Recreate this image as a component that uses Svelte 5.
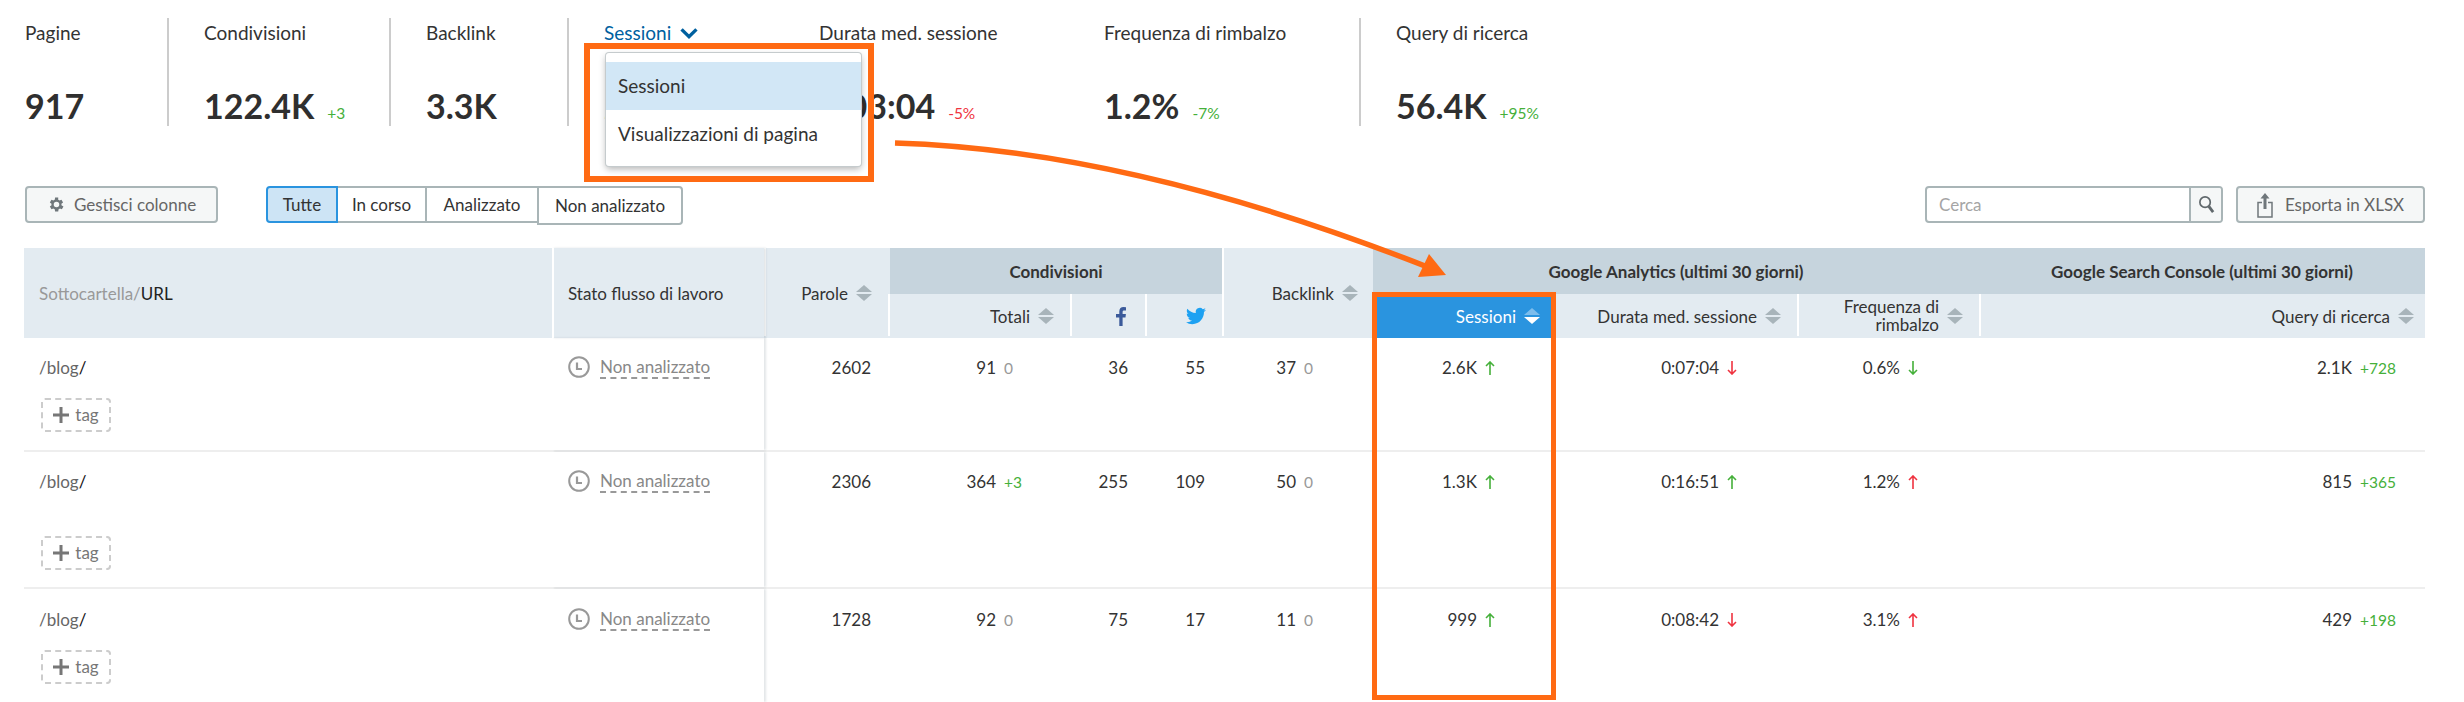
<script>
  const kpis = [
    { label: 'Pagine', value: '917', w: 142, plain: true },
    { label: 'Condivisioni', value: '122.4K', delta: '+3', w: 222, line: true },
    { label: 'Backlink', value: '3.3K', w: 178, line: true },
    { label: 'Sessioni', value: '2.6K', w: 252, line: true, link: true },
    { label: 'Durata med. sessione', value: '0:03:04', delta: '-5%', bad: true, w: 285, plain: true },
    { label: 'Frequenza di rimbalzo', value: '1.2%', delta: '-7%', w: 255, plain: true },
    { label: 'Query di ricerca', value: '56.4K', delta: '+95%', w: 300, line: true }
  ];
  const tabs = ['Tutte', 'In corso', 'Analizzato', 'Non analizzato'];
  const rows = [
    { cls: 'r1', par: '2602', tot: '91', totD: '0', totC: 'zero', fb: '36', tw: '55', bl: '37', ses: '2.6K', sesA: 'up good', dur: '0:07:04', durA: 'down bad', fr: '0.6%', frA: 'down good', q: '2.1K', qD: '+728' },
    { cls: 'r2', par: '2306', tot: '364', totD: '+3', totC: 'pos', fb: '255', tw: '109', bl: '50', ses: '1.3K', sesA: 'up good', dur: '0:16:51', durA: 'up good', fr: '1.2%', frA: 'up bad', q: '815', qD: '+365' },
    { cls: 'r3', par: '1728', tot: '92', totD: '0', totC: 'zero', fb: '75', tw: '17', bl: '11', ses: '999', sesA: 'up good', dur: '0:08:42', durA: 'down bad', fr: '3.1%', frA: 'up bad', q: '429', qD: '+198' }
  ];
</script>

{#snippet sort(active = false)}
  <svg class="sort" class:active viewBox="0 0 16 16" width="16" height="16" aria-hidden="true">
    <path class="s-up" d="M8 0 16 7H0z" />
    <path class="s-down" d="M0 9h16l-8 7z" />
  </svg>
{/snippet}

{#snippet arrow(kind)}
  <svg class="arrow {kind}" viewBox="0 0 10 14" width="10" height="14" aria-hidden="true">
    {#if kind.startsWith('up')}
      <path d="M5 14V1M1 5l4-4 4 4" />
    {:else}
      <path d="M5 0v13M1 9l4 4 4-4" />
    {/if}
  </svg>
{/snippet}

<div class="page">
  <section class="kpis">
    {#each kpis as k}
      <div class="kpi" class:plain={k.plain} class:line={k.line} style="width:{k.w}px">
        <div class="kpi-label" class:link={k.link}>
          {#if k.link}
            <span class="under">{k.label}</span>
            <svg viewBox="0 0 20 14" width="20" height="13" aria-hidden="true"><path d="M2 2.500l8 8 8-8" fill="none" stroke="#00609f" stroke-width="3.600" /></svg>
          {:else}
            {k.label}
          {/if}
        </div>
        <div class="kpi-value">
          <b>{k.value}</b>
          {#if k.delta}<span class="kpi-delta" class:bad={k.bad}>{k.delta}</span>{/if}
        </div>
      </div>
    {/each}
  </section>

  <section class="toolbar">
    <button class="btn manage">
      <svg viewBox="0 0 24 24" width="19" height="19" aria-hidden="true"><path fill="#6f777b" d="M19.400 13a7.600 7.600 0 0 0 0-2l2.100-1.600-2-3.500-2.500 1a7.500 7.500 0 0 0-1.700-1L15.400 3.200h-4l-.4 2.700a7.500 7.500 0 0 0-1.700 1l-2.500-1-2 3.500L6.900 11a7.600 7.600 0 0 0 0 2l-2.100 1.600 2 3.500 2.500-1a7.500 7.500 0 0 0 1.700 1l.4 2.700h4l.4-2.700a7.500 7.500 0 0 0 1.700-1l2.500 1 2-3.500zM13.200 15.500a3.500 3.500 0 1 1 0-7 3.500 3.500 0 0 1 0 7z" transform="translate(-1.200 0)"/></svg>
      Gestisci colonne
    </button>
    <div class="tabs">
      {#each tabs as t, i}
        <button class="tab t{i}" class:on={i === 0}>{t}</button>
      {/each}
    </div>
    <div class="tools">
      <div class="search">
        <span class="ph">Cerca</span>
        <span class="search-btn">
          <svg viewBox="0 0 18 20" width="17" height="19" aria-hidden="true"><circle cx="7.500" cy="7.500" r="5.500" fill="none" stroke="#60686c" stroke-width="1.800"/><path d="M11.500 12 16 18" stroke="#60686c" stroke-width="3" fill="none"/></svg>
        </span>
      </div>
      <button class="btn export">
        <svg viewBox="0 0 16 26" width="16" height="26" aria-hidden="true"><path d="M8 1 3.500 6.500h3V17h3V6.500h3z" fill="#6f777b"/><path d="M5 10.500H1V25h14V10.500h-4" fill="none" stroke="#6f777b" stroke-width="1.500"/></svg>
        Esporta in XLSX
      </button>
    </div>
  </section>

  <section class="table">
    <div class="head">
      <div class="th c1"><span class="muted">Sottocartella/</span>URL</div>
      <div class="th c2 frozen">Stato flusso di lavoro</div>
      <div class="th c3 sep right">Parole {@render sort()}</div>
      <div class="group g-share">Condivisioni</div>
      <div class="th c7 sep right">Backlink {@render sort()}</div>
      <div class="group g-ga">Google Analytics (ultimi 30 giorni)</div>
      <div class="group g-gsc">Google Search Console (ultimi 30 giorni)</div>
      <div class="th sub c4 sep right">Totali {@render sort()}</div>
      <div class="th sub c5 sep right">
        <svg class="fb" viewBox="0 0 10 19" width="10" height="19" aria-hidden="true"><path fill="#3b5a9a" d="M6.600 19v-8.500h2.900l.4-3.400H6.600V5c0-1 .3-1.600 1.700-1.600H10V.3A22 22 0 0 0 7.500 0C5 0 3.300 1.500 3.300 4.400v2.700H0v3.400h3.300V19z"/></svg>
      </div>
      <div class="th sub c6 sep right">
        <svg class="tw" viewBox="0 0 24 24" width="20" height="20" aria-hidden="true"><path fill="#1da1f2" d="M23.953 4.570a10 10 0 0 1-2.825.775 4.958 4.958 0 0 0 2.163-2.723c-.951.555-2.005.959-3.127 1.184a4.920 4.920 0 0 0-8.384 4.482C7.690 8.095 4.067 6.130 1.640 3.162a4.822 4.822 0 0 0-.666 2.475c0 1.710.870 3.213 2.188 4.096a4.904 4.904 0 0 1-2.228-.616v.060a4.923 4.923 0 0 0 3.946 4.827 4.996 4.996 0 0 1-2.212.085 4.936 4.936 0 0 0 4.604 3.417 9.867 9.867 0 0 1-6.102 2.105c-.390 0-.779-.023-1.170-.067a13.995 13.995 0 0 0 7.557 2.209c9.053 0 13.998-7.496 13.998-13.985 0-.210 0-.420-.015-.630A9.935 9.935 0 0 0 24 4.590z"/></svg>
      </div>
      <div class="th sub c8 selected right">Sessioni {@render sort(true)}</div>
      <div class="th sub c9 right">Durata med. sessione {@render sort()}</div>
      <div class="th sub c10 sep right"><span class="wrap">Frequenza di<br />rimbalzo</span> {@render sort()}</div>
      <div class="th sub c11 sep right">Query di ricerca {@render sort()}</div>
    </div>

    {#each rows as r}
      <div class="row {r.cls}">
        <div class="td url-cell">
          <div class="url">/blog<span class="dark">/</span></div>
          <div class="tag">
            <svg viewBox="0 0 16 16" width="16" height="16" aria-hidden="true"><path d="M8 0v16M0 8h16" stroke="#777" stroke-width="3"/></svg>
            tag
          </div>
        </div>
        <div class="td status frozen">
          <svg viewBox="0 0 22 22" width="22" height="22" aria-hidden="true"><circle cx="11" cy="11" r="9.800" fill="none" stroke="#999" stroke-width="2"/><path d="M9 6.500V13h5" fill="none" stroke="#999" stroke-width="2.200"/></svg>
          <span class="dash">Non analizzato</span>
        </div>
        <div class="td num p-par">{r.par}</div>
        <div class="td pair p-tot"><span class="n">{r.tot}</span><span class="d {r.totC}">{r.totD}</span></div>
        <div class="td num p-soc">{r.fb}</div>
        <div class="td num p-soc">{r.tw}</div>
        <div class="td pair p-bl"><span class="n">{r.bl}</span><span class="d zero">0</span></div>
        <div class="td pair p-ses"><span class="n">{r.ses}</span>{@render arrow(r.sesA)}</div>
        <div class="td pair p-dur"><span class="n">{r.dur}</span>{@render arrow(r.durA)}</div>
        <div class="td pair p-fr"><span class="n">{r.fr}</span>{@render arrow(r.frA)}</div>
        <div class="td pair p-q"><span class="n">{r.q}</span><span class="d pos">{r.qD}</span></div>
      </div>
    {/each}
  </section>

  <div class="menu">
    <div class="item on">Sessioni</div>
    <div class="item">Visualizzazioni di pagina</div>
  </div>
  <div class="mark mark-menu"></div>
  <div class="mark mark-col"></div>
  <svg class="callout" viewBox="0 0 2464 702" width="2464" height="702" aria-hidden="true">
    <path d="M895 143Q1130 150 1425 266" fill="none" stroke="#ff6a13" stroke-width="5.500" />
    <path d="M1429 254 1446 275 1418 277z" fill="#ff6a13" />
  </svg>
</div>

<style>
  :global(body) { margin: 0; background: #fff; }
  .page {
    position: relative;
    width: 2464px;
    height: 702px;
    overflow: hidden;
    font-family: Lato, "Noto Sans", sans-serif;
    color: #333;
    font-size: 17px;
    box-sizing: border-box;
    padding-top: 18px;
  }
  button { font: inherit; color: inherit; }

  .kpis { display: flex; padding-left: 25px; height: 108px; }
  .kpi { box-sizing: border-box; height: 108px; flex: none; }
  .kpi.line { border-left: 2px solid #ccc; padding-left: 35px; }
  .kpi-label { font-size: 19px; line-height: 30px; height: 30px; white-space: nowrap; display: flex; align-items: center; gap: 8px; }
  .kpi-label.link { color: #00609f; }
  .under { border-bottom: 1.500px solid #00609f; line-height: 24px; }
  .kpi-value { margin-top: 38px; line-height: 40px; white-space: nowrap; display: flex; align-items: baseline; gap: 13px; }
  .kpi-value b { font-size: 34px; font-weight: 700; color: #2f2f2f; }
  .kpi-delta { font-size: 15.500px; color: #45b03a; }
  .kpi-delta.bad { color: #ef3340; }

  .toolbar { display: flex; align-items: flex-start; margin-top: 60px; padding: 0 39px 0 25px; height: 37px; }
  .btn {
    box-sizing: border-box; height: 37px; display: flex; align-items: center; justify-content: center; gap: 8px;
    border: 2px solid #a9b5b7; border-radius: 4px; background: #f5f7f7; color: #666; padding: 0; white-space: nowrap; font-size: 17px;
  }
  .manage { width: 193px; }
  .export { width: 189px; gap: 12px; }
  .tabs { display: flex; margin-left: 48px; }
  .tab { box-sizing: border-box; height: 37px; background: #fff; border: 2px solid #a9b5b7; border-left-width: 0; padding: 0; font-size: 17px; white-space: nowrap; }
  .t0 { width: 72px; border-left-width: 2px; border-radius: 4px 0 0 4px; }
  .t1 { width: 89px; }
  .t2 { width: 112px; }
  .t3 { width: 146px; height: 39px; border-left-width: 2px; margin-left: -2px; border-radius: 0 4px 4px 0; }
  .tab.on { background: #cde4f5; border-color: #2a94df; }
  .tools { margin-left: auto; display: flex; gap: 13px; }
  .search { box-sizing: border-box; width: 298px; height: 37px; display: flex; border: 2px solid #a9b5b7; border-radius: 4px; align-items: stretch; }
  .ph { flex: 1; color: #a5a5a5; padding-left: 12px; line-height: 33px; }
  .search-btn { width: 30px; border-left: 2px solid #a9b5b7; background: #f5f7f7; display: flex; align-items: center; justify-content: center; border-radius: 0 2px 2px 0; }

  .table { --cols: 528px 212px 124px 182px 75px 77px 151px 183px 241px 182px 446px; margin: 25px 39px 0 24px; }
  .head { display: grid; grid-template-columns: var(--cols); grid-template-rows: 46px 44px; background: #e3ebf1; }
  .th { display: flex; align-items: center; gap: 8px; white-space: nowrap; background-color: #e3ebf1; font-size: 17px; box-sizing: border-box; color: #333; }
  .right { justify-content: flex-end; padding-right: 16px; }
  .sep {
    background-image: linear-gradient(#fff, #fff);
    background-size: 2px calc(100% - 2px);
    background-repeat: no-repeat;
  }
  .c1 { grid-row: 1 / 3; grid-column: 1; padding-left: 15px; color: #222; }
  .c1 { gap: 0; background-image: none; }
  .muted { color: #999; }
  .c2 { grid-row: 1 / 3; grid-column: 2; padding-left: 14px; border-left: 2px solid #fff; }
  .c3 { grid-row: 1 / 3; grid-column: 3; }
  .c7 { grid-row: 1 / 3; grid-column: 7; padding-right: 15px; }
  .g-share, .g-ga, .g-gsc {
    background: #c6d4dd; font-weight: 700; display: flex; align-items: center; justify-content: center;
    grid-row: 1; font-size: 17px; color: #333; box-sizing: border-box; white-space: nowrap;
  }
  .g-share { grid-column: 4 / 7; margin-left: 2px; }
  .g-ga { grid-column: 8 / 11; }
  .g-gsc { grid-column: 11; }
  .sub { grid-row: 2; }
  .c4 { grid-column: 4; }
  .c5 { grid-column: 5; padding-right: 19px; }
  .c6 { grid-column: 6; }
  .c8 { grid-column: 8; background-color: #2a94df; color: #fff; }
  .c9 { grid-column: 9; }
  .c10 { grid-column: 10; }
  .c11 { grid-column: 11; padding-right: 11px; }
  .wrap { text-align: right; line-height: 18px; }
  .frozen { position: relative; z-index: 1; box-shadow: 2px 0 2px rgba(60, 80, 90, .14); }
  .sort { flex: none; }
  .s-up, .s-down { fill: #a8b4ba; }
  .sort.active .s-up { fill: #7dbdec; }
  .sort.active .s-down { fill: #fff; }

  .row { display: grid; grid-template-columns: var(--cols); box-sizing: border-box; border-bottom: 2px solid #eee; }
  .r1 { height: 114px; }
  .r2 { height: 137px; }
  .r3 { height: 113px; border-bottom: 0; }
  .td { padding-top: 18px; line-height: 24px; font-size: 17px; box-sizing: border-box; white-space: nowrap; color: #333; }
  .r3 .td { padding-top: 19px; }
  .url-cell { padding-left: 15px; }
  .url { color: #666; }
  .dark { color: #111; }
  .tag {
    box-sizing: border-box; margin-left: 2px; width: 70px; height: 34px; border: 2px dashed #ccc; border-radius: 4px;
    display: flex; align-items: center; justify-content: center; gap: 6px; color: #777; font-size: 17px;
  }
  .r1 .tag { margin-top: 18px; }
  .r2 .tag { margin-top: 42px; }
  .r3 .tag { margin-top: 18px; }
  .status { display: flex; align-items: flex-start; gap: 10px; padding-left: 14px; border-left: 2px solid transparent; color: #888; height: 100%; }
  .dash { border-bottom: 2px dashed #999; line-height: 21px; }
  .num { text-align: right; }
  .p-par { padding-right: 17px; }
  .p-soc { padding-right: 17px; }
  .pair { display: grid; align-items: start; column-gap: 8px; grid-template-columns: var(--n) auto; justify-content: start; }
  .n { text-align: right; }
  .p-tot { --n: 108px; }
  .p-bl { --n: 74px; }
  .p-ses { --n: 104px; }
  .p-dur { --n: 163px; }
  .p-fr { --n: 103px; }
  .p-q { --n: 373px; }
  .d { font-size: 15.500px; }
  .zero { color: #999; }
  .pos { color: #45b03a; }
  .arrow { margin-top: 5px; fill: none; stroke-width: 1.600; }
  .arrow.good { stroke: #45b03a; }
  .arrow.bad { stroke: #ef3340; }

  .menu {
    position: absolute; left: 606px; top: 53px; width: 255px; height: 113px; box-sizing: border-box; padding: 9px 0;
    background: #fff; border-radius: 3px; z-index: 3;
    box-shadow: 0 0 0 1px #c5cbcd, 0 3px 7px rgba(0, 0, 0, .3);
    font-size: 19px;
  }
  .item { height: 47px; line-height: 47px; padding-left: 12px; white-space: nowrap; }
  .item.on { background: #d2e7f6; height: 48px; line-height: 48px; }
  .mark { position: absolute; box-sizing: border-box; border: 6px solid #ff6a13; z-index: 4; }
  .mark-menu { left: 584px; top: 43px; width: 290px; height: 139px; }
  .mark-col { left: 1372px; top: 292px; width: 184px; height: 408px; border-width: 5px; }
  .callout { position: absolute; left: 0; top: 0; z-index: 5; pointer-events: none; }
</style>
